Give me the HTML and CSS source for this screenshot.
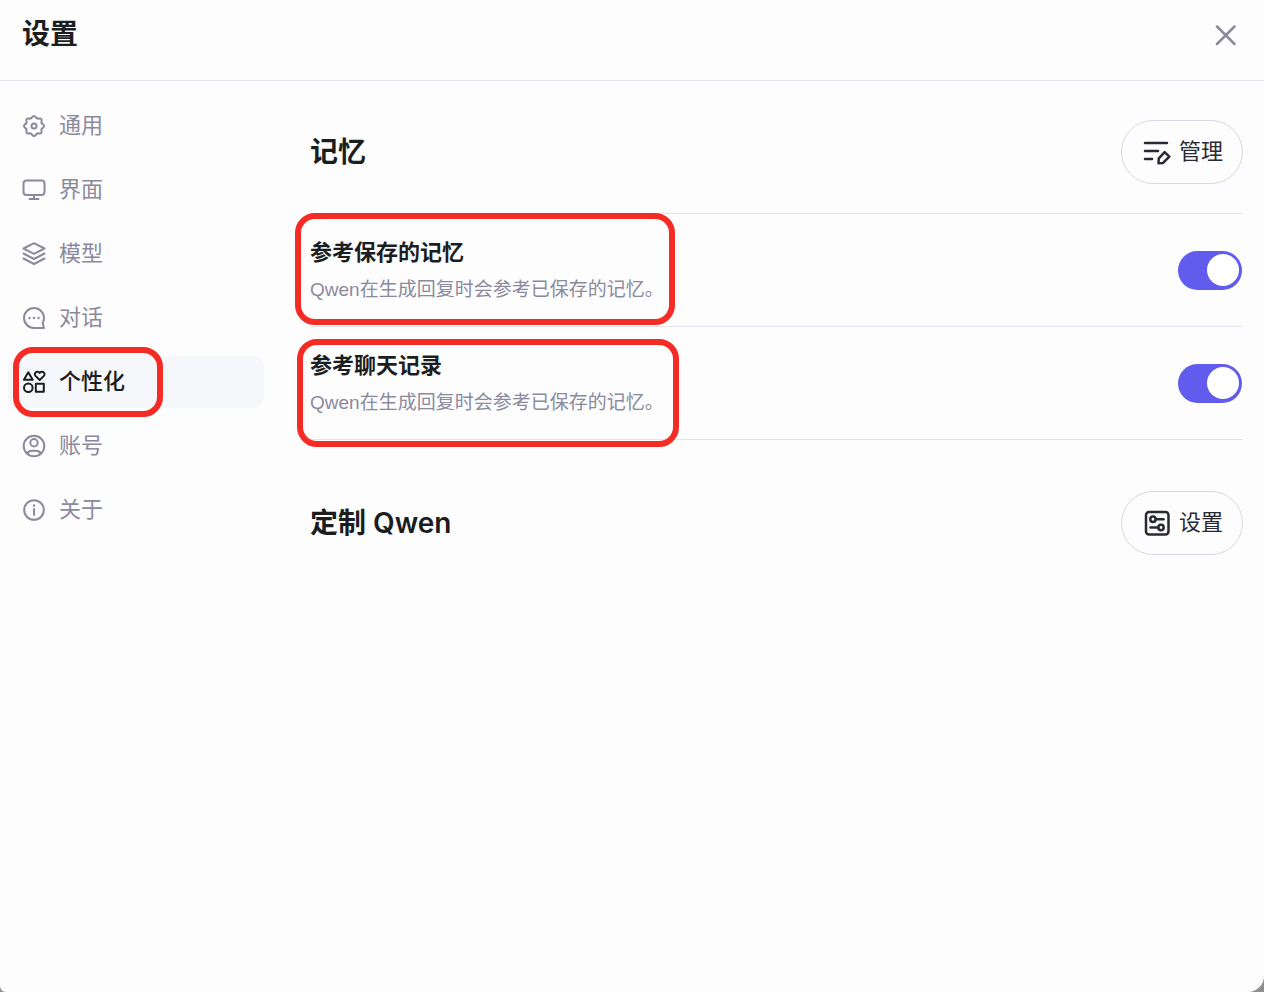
FILE: index.html
```html
<!DOCTYPE html>
<html lang="zh-CN">
<head>
    <meta charset="UTF-8">
    <meta name="viewport" content="width=device-width, initial-scale=1.0">
    <title>设置</title>
    <link rel="stylesheet" href="styles.css">
</head>
<body>
    <div class="dialog">
        <header class="header">
            <h1>设置</h1>
            <button class="close" type="button" aria-label="关闭">
                <svg viewBox="0 0 32 32"><path d="M7 7.500l17.500 17.500M24.500 7.500L7 25"/></svg>
            </button>
        </header>
        <div class="main">
            <nav class="nav">
                <a class="nav-item" href="#general">
                    <svg viewBox="0 0 24 24"><path d="M20.93 13.78Q18.84 14.83 19.57 17.06Q19.92 19.92 17.06 19.57Q14.83 18.84 13.78 20.93Q12 23.2 10.22 20.93Q9.17 18.84 6.94 19.57Q4.08 19.92 4.43 17.06Q5.16 14.83 3.07 13.78Q.8 12 3.07 10.22Q5.16 9.17 4.43 6.94Q4.08 4.08 6.94 4.43Q9.17 5.16 10.22 3.07Q12 .8 13.78 3.07Q14.83 5.16 17.06 4.43Q19.92 4.08 19.57 6.94Q18.84 9.17 20.93 10.22Q23.2 12 20.93 13.78Z"/><circle cx="12" cy="12" r="2.5"/></svg>
                    通用
                </a>
                <a class="nav-item" href="#interface">
                    <svg viewBox="0 0 24 24"><rect x="1.5" y="2.5" width="21" height="14.5" rx="3"/><path d="M12 17v4M7.5 21h9"/></svg>
                    界面
                </a>
                <a class="nav-item" href="#models">
                    <svg viewBox="0 0 24 24"><path d="M12 1.2L22.500 6.500 12 11.800 1.500 6.500zM1.5 11.500L12 17 22.5 11.500M1.5 16.500L12 22 22.5 16.500"/></svg>
                    模型
                </a>
                <a class="nav-item" href="#chats">
                    <svg viewBox="0 0 24 24"><path d="M12 22A10 10 0 1 1 22 12c0 1.900-.5 3.600-1.400 5.100L22 22z"/><path class="dots" d="M7.500 12h.01M12 12h.01M16.500 12h.01"/></svg>
                    对话
                </a>
                <a class="nav-item active" href="#personalization">
                    <svg viewBox="0 0 24 24"><path d="M6.300 2.300L10.700 9.800H1.900zM17.700 10L13.500 5.900C11.300 3.200 15.300 -.2 17.700 3 20.100 -.2 24.100 3.200 21.900 5.900z"/><circle cx="6.300" cy="17.700" r="4.300"/><rect x="13.800" y="13.800" width="8" height="8"/></svg>
                    个性化
                    <span class="mark mark-nav"></span>
                </a>
                <a class="nav-item" href="#account">
                    <svg viewBox="0 0 24 24"><circle cx="12" cy="12" r="10.300"/><circle cx="12" cy="8.700" r="3.700"/><path d="M5.400 19.500c.8-1.800 2.400-2.700 4.600-2.700h4c2.200 0 3.800.9 4.600 2.700"/></svg>
                    账号
                </a>
                <a class="nav-item" href="#about">
                    <svg viewBox="0 0 24 24"><circle cx="12" cy="12" r="9.800"/><path d="M12 11v6"/><path class="dots" d="M12 7.500h.01"/></svg>
                    关于
                </a>
            </nav>
            <main class="content">
                <section class="memory">
                    <div class="section-head">
                        <h2>记忆</h2>
                        <button class="pill" type="button">
                            <svg viewBox="0 0 28 28"><path d="M2 5h22M2 13h13M2 21h7M15.500 25.200l.3-4.900 5.900-6.200 4.600 4.500-6.200 6.300z"/></svg>
                            管理
                        </button>
                    </div>
                    <div class="rows">
                        <div class="row">
                            <label class="row-text" for="saved">
                                <span class="row-title">参考保存的记忆</span>
                                <span class="row-desc">Qwen在生成回复时会参考已保存的记忆。</span>
                            </label>
                            <input class="switch" id="saved" type="checkbox" checked>
                            <span class="mark mark-saved"></span>
                        </div>
                        <div class="row">
                            <label class="row-text" for="history">
                                <span class="row-title">参考聊天记录</span>
                                <span class="row-desc">Qwen在生成回复时会参考已保存的记忆。</span>
                            </label>
                            <input class="switch" id="history" type="checkbox" checked>
                            <span class="mark mark-history"></span>
                        </div>
                    </div>
                </section>
                <section>
                    <div class="section-head">
                        <h2>定制 Qwen</h2>
                        <button class="pill" type="button">
                            <svg viewBox="0 0 28 28"><rect x="3" y="3" width="22.500" height="22.500" rx="3"/><circle cx="10" cy="10.300" r="2.700"/><path d="M12.700 10.300H20.500"/><circle cx="18" cy="18.500" r="2.700"/><path d="M7.500 18.500h7.800"/></svg>
                            设置
                        </button>
                    </div>
                </section>
            </main>
        </div>
    </div>
</body>
</html>
```
FILE: styles.css
```css
* {
    margin: 0;
    padding: 0;
    box-sizing: border-box;
}

body {
    background-color: #8f8f8f;
    color: #1c1d1f;
    font-family: "Liberation Sans", "Noto Sans CJK SC", sans-serif;
    font-size: 22px;
    line-height: 30px;
}

svg {
    flex: none;
    fill: none;
    stroke: currentColor;
    stroke-linecap: round;
    stroke-linejoin: round;
}

button {
    background: none;
    border: none;
    color: inherit;
    font: inherit;
    cursor: pointer;
}

.dialog {
    display: flex;
    flex-direction: column;
    min-height: 100vh;
    background-color: #fdfdfd;
    border-radius: 0 0 16px 6px;
}

.header {
    display: flex;
    align-items: center;
    justify-content: space-between;
    height: 81px;
    padding: 0 22px 10px;
    border-bottom: 1px solid #e2e1ec;
}

h1, h2 {
    font-family: Inter, "Noto Sans CJK SC", sans-serif;
    font-size: 28px;
    font-weight: 600;
    line-height: 40px;
}

h1 {
    padding-bottom: 2px;
}

.close {
    display: flex;
    color: #8b8a9d;
}

.close svg {
    width: 32px;
    height: 32px;
    stroke-width: 2.5;
}

.main {
    display: flex;
    flex: 1;
}

.nav {
    display: flex;
    flex-direction: column;
    flex: none;
    gap: 12px;
    width: 264px;
    padding: 19px 0 19px 8px;
}

.nav-item {
    position: relative;
    display: flex;
    align-items: center;
    gap: 13px;
    height: 52px;
    padding: 0 14px;
    border-radius: 12px;
    color: #8b8a9d;
    text-decoration: none;
}

.nav-item svg {
    width: 24px;
    height: 24px;
    stroke-width: 2;
}

.nav-item .dots {
    stroke-width: 2.4;
}

.nav-item.active {
    background-color: #f6f7fb;
    color: #1c1d1f;
    font-weight: 500;
}

.content {
    flex: 1;
    padding: 39px 21px 39px 46px;
}

.memory {
    margin-bottom: 51px;
}

.section-head {
    display: flex;
    align-items: center;
    justify-content: space-between;
}

.pill {
    display: flex;
    align-items: center;
    gap: 8px;
    height: 64px;
    padding: 0 19px 0 21px;
    border: 1px solid #d8d7e6;
    border-radius: 32px;
    color: #2a2a33;
}

.pill svg {
    width: 28px;
    height: 28px;
    stroke-width: 2.5;
}

.rows {
    margin-top: 29px;
    border-top: 1px solid #e4e4ee;
}

.row {
    position: relative;
    display: flex;
    align-items: center;
    justify-content: space-between;
    height: 113px;
    padding-right: 1px;
    border-bottom: 1px solid #e4e4ee;
}

.row-text {
    display: flex;
    flex-direction: column;
    gap: 9px;
}

.row-title {
    font-weight: 600;
    line-height: 30px;
}

.row-desc {
    color: #8b8a9d;
    font-size: 19px;
    line-height: 26px;
}

.switch {
    appearance: none;
    display: flex;
    align-items: center;
    width: 64px;
    height: 39px;
    padding: 3px;
    border-radius: 20px;
    background-color: #c9c9d6;
    cursor: pointer;
}

.switch::before {
    content: "";
    width: 32px;
    height: 32px;
    border-radius: 50%;
    background-color: #fff;
}

.switch:checked {
    justify-content: flex-end;
    background-color: #615ced;
}

/* red highlight frames */
.mark {
    position: absolute;
    border: 6px solid #f42c25;
    border-radius: 20px;
    pointer-events: none;
}

.mark-nav {
    top: -9px;
    left: 5px;
    width: 150px;
    height: 70px;
}

.mark-saved {
    top: -1px;
    left: -15px;
    width: 380px;
    height: 112px;
}

.mark-history {
    top: 12px;
    left: -13px;
    width: 382px;
    height: 108px;
}
```
